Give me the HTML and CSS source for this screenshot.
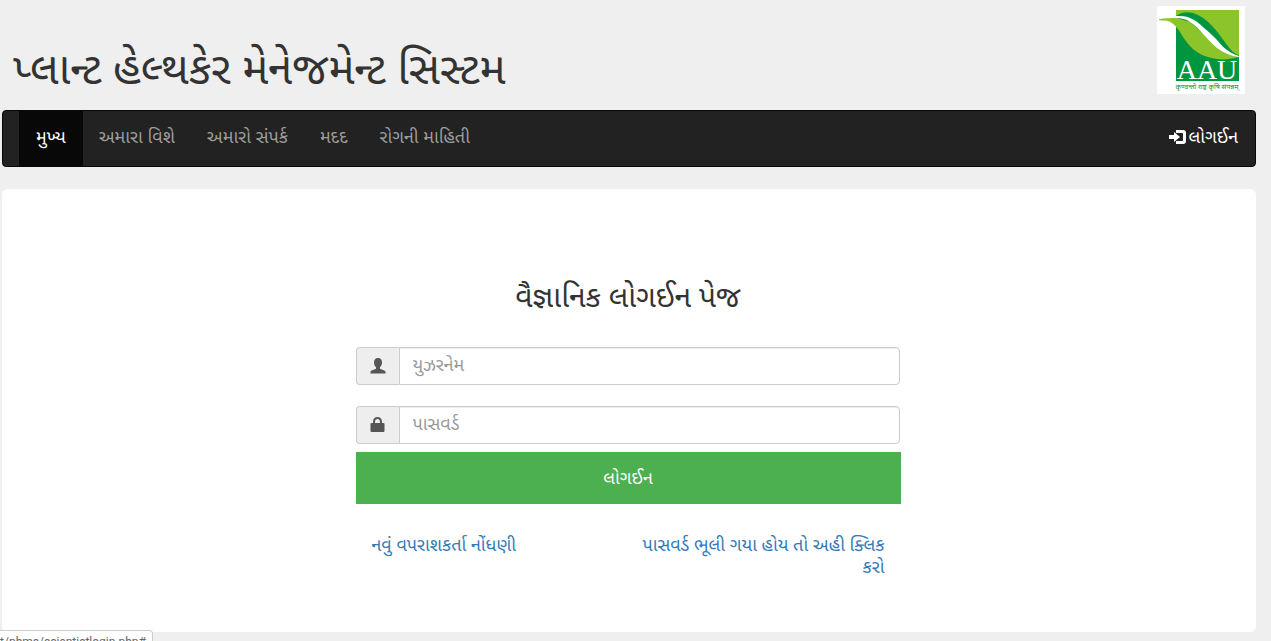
FILE: index.html
```html
<!DOCTYPE html>
<html lang="gu">
<head>
<meta charset="utf-8">
<meta name="viewport" content="width=device-width, initial-scale=1">
<title>પ્લાન્ટ હેલ્થકેર મેનેજમેન્ટ સિસ્ટમ</title>
<link rel="stylesheet" href="styles.css">
</head>
<body>
<div class="page">
  <header class="masthead">
    <h1 class="site-title">પ્લાન્ટ હેલ્થકેર મેનેજમેન્ટ સિસ્ટમ</h1>
    <svg class="logo" viewBox="0 0 88 88" role="img" aria-label="AAU">
      <rect width="88" height="88" fill="#fff"/>
      <rect x="19" y="4" width="63" height="71" fill="#009640"/>
      <path d="M19 4H82V49C76 47 74 44 70 39C60 25 50 11 36 7C29 5 23 7 19 10Z" fill="#8bc52a"/>
      <path d="M2 13C8 12 14 12 20 12L33 16C47 26 56 43 82 51C74 53 66 54 60 53C49 51 43 49 36 43C28 36 25 28 20 22C17 18 14 16 11 15C8 14 5 15 2 14Z" fill="#8bc52a"/>
      <path d="M19 10C24 10 29 10 33 12C38 14 42 17 46 21C51 25 56 30 60 34C65 40 70 46 82 50V51C74 50 67 47 60 42C55 38 51 33 46 28C42 23 38 19 33 16C29 13 24 12 19 12Z" fill="#fff"/>
      <text class="logo-name" x="50" y="73" text-anchor="middle">AAU</text>
      <text class="logo-motto" x="50" y="83" text-anchor="middle">कृण्वन्तो राष्ट्रं कृषि संपन्नम्</text>
    </svg>
  </header>

  <nav class="navbar">
    <ul class="nav-list">
      <li><a class="nav-link active" href="#">મુખ્ય</a></li>
      <li><a class="nav-link" href="#">અમારા વિશે</a></li>
      <li><a class="nav-link" href="#">અમારો સંપર્ક</a></li>
      <li><a class="nav-link" href="#">મદદ</a></li>
      <li><a class="nav-link" href="#">રોગની માહિતી</a></li>
    </ul>
    <a class="nav-link nav-login" href="#">
      <svg class="login-icon" viewBox="0 0 17 16" aria-hidden="true">
        <path d="M7 1H14Q17 1 17 4V12Q17 15 14 15H7V12H13Q14 12 14 11V5Q14 4 13 4H7Z" fill="currentColor"/>
        <path d="M0 6H5V3L11 8L5 13V10H0Z" fill="currentColor"/>
      </svg>
      <span>લોગઈન</span>
    </a>
  </nav>

  <main class="panel">
    <form class="login-form">
      <h2 class="form-title">વૈજ્ઞાનિક લોગઈન પેજ</h2>
      <div class="input-group">
        <label class="addon" for="username" aria-label="યુઝરનેમ">
          <svg class="field-icon" viewBox="0 0 16 16" aria-hidden="true">
            <path d="M8 0C10.800 0 12 2 12 4.500C12 6.500 11.200 8 10 9.200V10.500C10.500 11.600 15.500 12 15.500 14V15.500H.5V14C.5 12 5.500 11.600 6 10.500V9.200C4.800 8 4 6.500 4 4.500C4 2 5.200 0 8 0Z" fill="currentColor"/>
          </svg>
        </label>
        <input class="field" id="username" type="text" placeholder="યુઝરનેમ">
      </div>
      <div class="input-group">
        <label class="addon" for="password" aria-label="પાસવર્ડ">
          <svg class="field-icon" viewBox="0 0 16 16" aria-hidden="true">
            <path d="M3 6V5C3 1.800 4.800 0 7.500 0S12 1.800 12 5V6H13.500Q14.500 6 14.500 7V14Q14.500 15 13.500 15H1.500Q.5 15 .5 14V7Q.5 6 1.500 6ZM5 6H10V5C10 3 9 2 7.500 2S5 3 5 5Z" fill="currentColor" fill-rule="evenodd"/>
          </svg>
        </label>
        <input class="field" id="password" type="password" placeholder="પાસવર્ડ">
      </div>
      <button class="submit" type="button">લોગઈન</button>
      <div class="links">
        <div class="link-cell"><a href="#">નવું વપરાશકર્તા નોંધણી</a></div>
        <div class="link-cell link-end"><a href="#">પાસવર્ડ ભૂલી ગયા હોય તો અહી ક્લિક કરો</a></div>
      </div>
    </form>
  </main>
</div>
<div class="status"><span>st/phms/scientistlogin.php#</span></div>
</body>
</html>
```
FILE: styles.css
```css
* { box-sizing: border-box; }

body {
  margin: 0;
  background: #efefef;
  color: #333;
  font-family: "Noto Sans Gujarati", "Noto Sans", "Liberation Sans", sans-serif;
  font-size: 18px;
  line-height: 22px;
}

.page { padding: 0 15px 9px 2px; }

.masthead {
  display: flex;
  justify-content: space-between;
  align-items: flex-start;
  padding: 6px 11px 16px 11px;
}

.site-title {
  margin: 48px 0 0;
  font-size: 44px;
  font-weight: 400;
  line-height: 40px;
}

.logo { width: 88px; height: 88px; }
.logo-name { fill: #fff; font-family: "Liberation Serif", serif; font-size: 28px; }
.logo-motto { fill: #009640; font-family: "Noto Sans Devanagari", "Noto Sans", sans-serif; font-size: 7px; }

.navbar {
  display: flex;
  justify-content: space-between;
  padding: 0 1px 0 16px;
  background: #222;
  border: 1px solid #080808;
  border-radius: 4px;
}

.nav-list { display: flex; margin: 0; padding: 0; list-style: none; }

.nav-link {
  display: block;
  padding: 16px;
  color: #9d9d9d;
  line-height: 23px;
  text-decoration: none;
}

.nav-link.active { padding: 16px 17px; background: #080808; color: #fff; }
.nav-login { display: flex; align-items: flex-start; gap: 3px; color: #fff; }
.login-icon { width: 17px; height: 16px; margin-top: 2px; }

.panel {
  display: flex;
  justify-content: center;
  margin-top: 22px;
  padding: 91px 17px 52px 15px;
  background: #fff;
  border-radius: 6px;
}

.login-form { width: 100%; max-width: 545px; }

.form-title {
  margin: 0 0 27px;
  font-size: 30px;
  font-weight: 400;
  line-height: 40px;
  text-align: center;
}

.input-group { display: flex; height: 38px; margin: 0 1px 21px 0; }

.addon {
  display: flex;
  flex: 0 0 43px;
  align-items: center;
  justify-content: center;
  background: #eee;
  border: 1px solid #ccc;
  border-right: 0;
  border-radius: 4px 0 0 4px;
  color: #555;
}

.field-icon { width: 16px; height: 16px; }

.field {
  flex: 1;
  min-width: 0;
  padding: 8px 13px 6px;
  background: #fff;
  border: 1px solid #ccc;
  border-radius: 0 4px 4px 0;
  box-shadow: inset 0 1px 1px rgba(0, 0, 0, .075);
  color: #555;
  font: inherit;
}

.field::placeholder { color: #999; opacity: 1; }

.submit {
  display: block;
  width: 100%;
  height: 52px;
  margin-top: -13px;
  padding: 4px 0 0;
  background: #4caf50;
  border: 0;
  color: #fff;
  font: inherit;
}

.links {
  display: grid;
  grid-template-columns: 1fr minmax(0, 284px);
  margin-top: 32px;
}
.link-cell { padding: 0 16px; }
.link-end { text-align: right; }
.links a { color: #337ab7; text-decoration: none; }

.status {
  position: fixed;
  top: 630px;
  left: 0;
  display: flex;
  justify-content: flex-end;
  width: 153px;
  height: 22px;
  padding: 3px 6px;
  overflow: hidden;
  background: #fff;
  border: 1px solid #ccc;
  border-left: 0;
  border-radius: 0 4px 0 0;
  color: #666;
  font-family: Roboto, sans-serif;
  font-size: 12px;
  line-height: 16px;
  white-space: nowrap;
}
```
